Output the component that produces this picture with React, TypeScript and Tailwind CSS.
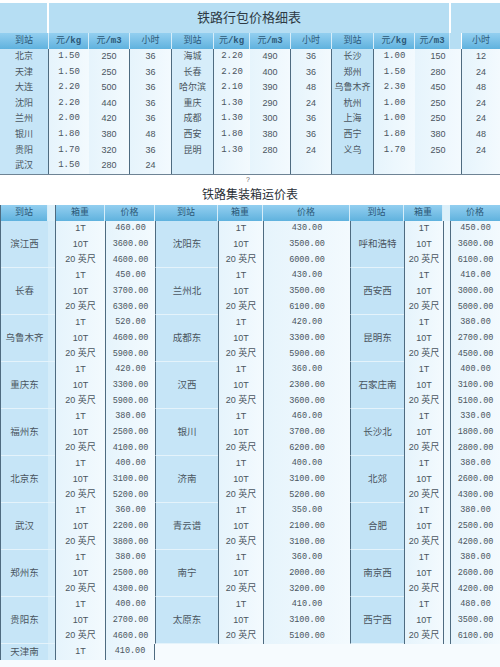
import React from "react";

const SERIF = "font-[Liberation_Serif,Noto_Sans_CJK_SC,serif]";
const MONO = "font-[Liberation_Mono,Noto_Sans_CJK_SC,monospace]";
const SANS = "font-[Liberation_Sans,Noto_Sans_CJK_SC,sans-serif]";

type Group = [string, string, string, string];

const baggage: Group[][] = [
  [["北京", "1.50", "250", "36"], ["海城", "2.20", "490", "36"], ["长沙", "1.00", "150", "12"]],
  [["天津", "1.50", "250", "36"], ["长春", "2.20", "400", "36"], ["郑州", "1.50", "280", "24"]],
  [["大连", "2.20", "500", "36"], ["哈尔滨", "2.10", "390", "48"], ["乌鲁木齐", "2.30", "450", "48"]],
  [["沈阳", "2.20", "440", "36"], ["重庆", "1.30", "290", "24"], ["杭州", "1.00", "250", "24"]],
  [["兰州", "2.00", "420", "36"], ["成都", "1.30", "300", "36"], ["上海", "1.00", "250", "24"]],
  [["银川", "1.80", "380", "48"], ["西安", "1.80", "380", "36"], ["西宁", "1.80", "380", "48"]],
  [["贵阳", "1.70", "320", "36"], ["昆明", "1.30", "280", "24"], ["义乌", "1.70", "250", "24"]],
  [["武汉", "1.50", "280", "24"], ["", "", "", ""], ["", "", "", ""]],
];

type Box = { name: string; prices: [string, string, string] };

const containers: [Box, Box, Box][] = [
  [
    { name: "滨江西", prices: ["460.00", "3600.00", "4600.00"] },
    { name: "沈阳东", prices: ["430.00", "3500.00", "6000.00"] },
    { name: "呼和浩特", prices: ["450.00", "3600.00", "6100.00"] },
  ],
  [
    { name: "长春", prices: ["450.00", "3700.00", "6300.00"] },
    { name: "兰州北", prices: ["430.00", "3500.00", "6100.00"] },
    { name: "西安西", prices: ["410.00", "3000.00", "5000.00"] },
  ],
  [
    { name: "乌鲁木齐", prices: ["520.00", "4600.00", "5900.00"] },
    { name: "成都东", prices: ["420.00", "3300.00", "5900.00"] },
    { name: "昆明东", prices: ["380.00", "2700.00", "4500.00"] },
  ],
  [
    { name: "重庆东", prices: ["420.00", "3300.00", "5900.00"] },
    { name: "汉西", prices: ["360.00", "2300.00", "3600.00"] },
    { name: "石家庄南", prices: ["400.00", "3100.00", "5100.00"] },
  ],
  [
    { name: "福州东", prices: ["380.00", "2500.00", "4100.00"] },
    { name: "银川", prices: ["460.00", "3700.00", "6200.00"] },
    { name: "长沙北", prices: ["330.00", "1800.00", "2800.00"] },
  ],
  [
    { name: "北京东", prices: ["400.00", "3100.00", "5200.00"] },
    { name: "济南", prices: ["400.00", "3100.00", "5200.00"] },
    { name: "北郊", prices: ["380.00", "2600.00", "4300.00"] },
  ],
  [
    { name: "武汉", prices: ["360.00", "2200.00", "3800.00"] },
    { name: "青云谱", prices: ["350.00", "2100.00", "3100.00"] },
    { name: "合肥", prices: ["380.00", "2500.00", "4200.00"] },
  ],
  [
    { name: "郑州东", prices: ["380.00", "2500.00", "4300.00"] },
    { name: "南宁", prices: ["360.00", "2000.00", "3200.00"] },
    { name: "南京西", prices: ["380.00", "2600.00", "4200.00"] },
  ],
  [
    { name: "贵阳东", prices: ["400.00", "2700.00", "4600.00"] },
    { name: "太原东", prices: ["410.00", "3100.00", "5100.00"] },
    { name: "西宁西", prices: ["480.00", "3500.00", "6100.00"] },
  ],
];

const weights = ["1T", "10T", "20 英尺"];

const cell = "flex items-center justify-center shrink-0";
const head = `${cell} bg-linear-to-b from-[#93cff0] to-[#5fb2de] text-[#2c5877] border-r border-[#d6edf9]`;
const data = "bg-linear-to-r from-[#e6f4fc] to-[#f3fafe]";
const line = "border-r border-[#4e6b80]";

const TopHeader = () => {
  const w = [49, 40, 41, 42, 42, 36, 41, 41, 42, 41, 35];
  const labels = ["到站", "元/kg", "元/m3", "小时", "到站", "元/kg", "元/m3", "小时", "到站", "元/kg", "元/m3"];
  return (
    <div className={`flex h-4 text-[9px] ${SERIF}`}>
      {labels.map((l, i) => (
        <div key={i} className={head} style={{ width: w[i] }}>
          {l.includes("/") ? (
            <span>
              元<span className={`${MONO} font-bold`}>{l.slice(1)}</span>
            </span>
          ) : (
            l
          )}
        </div>
      ))}
      <div className="w-[12px] shrink-0 bg-[#b6def3] border-r border-white" />
      <div className={`${head} flex-1 border-r-0`}>小时</div>
    </div>
  );
};

const TopRow = ({ row }: { row: Group[] }) => {
  const [a, b, c] = row;
  const num = `${cell} ${MONO}`;
  const sans = `${cell} ${SANS}`;
  return (
    <div className={`flex h-[15.6px] text-[9px] text-[#4a5560] ${SERIF}`}>
      <div className={`${cell} w-[49px] bg-[#c6e5f7] ${line}`}>{a[0]}</div>
      <div className={`${num} w-[40px] ${data}`}>{a[1]}</div>
      <div className={`${sans} w-[41px] ${data} ${line}`}>{a[2]}</div>
      <div className={`${sans} w-[42px] ${data} ${line}`}>{a[3]}</div>

      <div className={`${cell} w-[42px] bg-[#d6edfa] ${line}`}>{b[0]}</div>
      <div className={`${num} w-[36px] ${data}`}>{b[1]}</div>
      <div className={`${sans} w-[41px] ${data} ${line}`}>{b[2]}</div>
      <div className={`${sans} w-[41px] ${data} ${line}`}>{b[3]}</div>

      <div className={`${cell} w-[42px] bg-[#c3e4f6] ${line}`}>{c[0]}</div>
      <div className={`${num} w-[41px] ${data}`}>{c[1]}</div>
      <div className={`${sans} w-[47px] ${data} ${line}`}>{c[2]}</div>
      <div className={`${sans} flex-1 ${data}`}>{c[3]}</div>
    </div>
  );
};

const Weights = ({ w }: { w: string }) => (
  <div className={`flex ${w} shrink-0 flex-col border-l border-[#4e6b80] ${data}`}>
    {weights.map((x) => (
      <div key={x} className={`flex flex-1 items-center justify-center ${SANS} text-[9px]`}>
        {x}
      </div>
    ))}
  </div>
);

const Prices = ({ w, p }: { w: string; p: string[] }) => (
  <div className={`flex ${w} shrink-0 flex-col border-l border-[#4e6b80] ${data}`}>
    {p.map((x, i) => (
      <div key={i} className={`flex flex-1 items-center justify-center ${MONO} text-[8.5px]`}>
        {x}
      </div>
    ))}
  </div>
);

const Station = ({ w, name, bg }: { w: string; name: string; bg: string }) => (
  <div className={`${cell} ${w} ${bg} border-l border-[#4e6b80] border-b border-b-[#e4f3fb] text-[9.5px]`}>
    {name}
  </div>
);

export default function App() {
  return (
    <div className={`h-[667px] w-[500px] overflow-hidden bg-white text-[#4a5560] ${SERIF}`}>
      {/* 铁路行包价格细表 */}
      <div className="h-[3px]" />
      <div className="flex h-[30px] bg-[#b6def3]">
        <div className="w-[49px] border-r-2 border-white" />
        <div className="flex w-[402px] items-center justify-center border-r-2 border-white text-[13px] text-[#2e3a44]">
          铁路行包价格细表
        </div>
        <div className="flex-1" />
      </div>
      <TopHeader />
      {baggage.map((r, i) => (
        <TopRow key={i} row={r} />
      ))}
      <div className="h-px bg-[#6e8394]" />

      <div className={`flex h-[11px] items-center justify-center text-[7px] text-[#666] ${SANS}`}>
        <span className="ml-[-4px]">?</span>
      </div>
      <div className="flex h-[19px] items-center justify-center text-[12px] text-[#2a2f36]">
        铁路集装箱运价表
      </div>

      {/* 铁路集装箱运价表 */}
      <div className="border-l border-[#4e6b80]">
        <div className="flex h-4 text-[9px]">
          <div className={`${head} w-[47px]`}>到站</div>
          <div className="w-[7px] shrink-0 bg-[#dcf0fa]" />
          <div className={`${head} w-[50px] border-l border-l-[#4e6b80]`}>箱重</div>
          <div className={`${head} w-[50px]`}>价格</div>
          <div className={`${head} w-[63px]`}>到站</div>
          <div className={`${head} w-[45px]`}>箱重</div>
          <div className={`${head} w-[87px]`}>价格</div>
          <div className={`${head} w-[54px]`}>到站</div>
          <div className={`${head} w-[39px]`}>箱重</div>
          <div className="w-[7px] shrink-0 bg-[#dcf0fa]" />
          <div className={`${head} flex-1 border-r-0`}>价格</div>
        </div>

        {containers.map(([a, b, c], i) => (
          <div key={i} className="flex h-[47px] text-[#4a5560]">
            <div className={`${cell} w-[47px] border-b border-[#e4f3fb] bg-[#c6e5f7] text-[9.5px]`}>{a.name}</div>
            <div className="w-[7px] shrink-0 border-b border-[#e4f3fb] bg-[#d4ecf9]" />
            <Weights w="w-[50px]" />
            <Prices w="w-[50px]" p={a.prices} />
            <Station w="w-[63px]" name={b.name} bg="bg-[#c6e5f7]" />
            <Weights w="w-[45px]" />
            <Prices w="w-[87px]" p={b.prices} />
            <Station w="w-[54px]" name={c.name} bg="bg-[#c2e3f6]" />
            <Weights w="w-[39px]" />
            <div className="w-[7px] shrink-0 border-l border-[#4e6b80] bg-[#edf8fd]" />
            <Prices w="flex-1" p={c.prices} />
          </div>
        ))}

        <div className="flex h-4 text-[#4a5560]">
          <div className={`${cell} w-[47px] bg-[#c6e5f7] text-[9.5px]`}>天津南</div>
          <div className="w-[7px] shrink-0 bg-[#d4ecf9]" />
          <div className={`${cell} w-[50px] border-l border-[#4e6b80] ${data} ${SANS} text-[9px]`}>1T</div>
          <div className={`${cell} w-[50px] border-x border-[#4e6b80] ${data} ${MONO} text-[8.5px]`}>410.00</div>
          <div className="flex-1 bg-[#f6fbfe]" />
        </div>
      </div>
      <div className="h-[7px] bg-[#f6fbfe]" />
    </div>
  );
}
